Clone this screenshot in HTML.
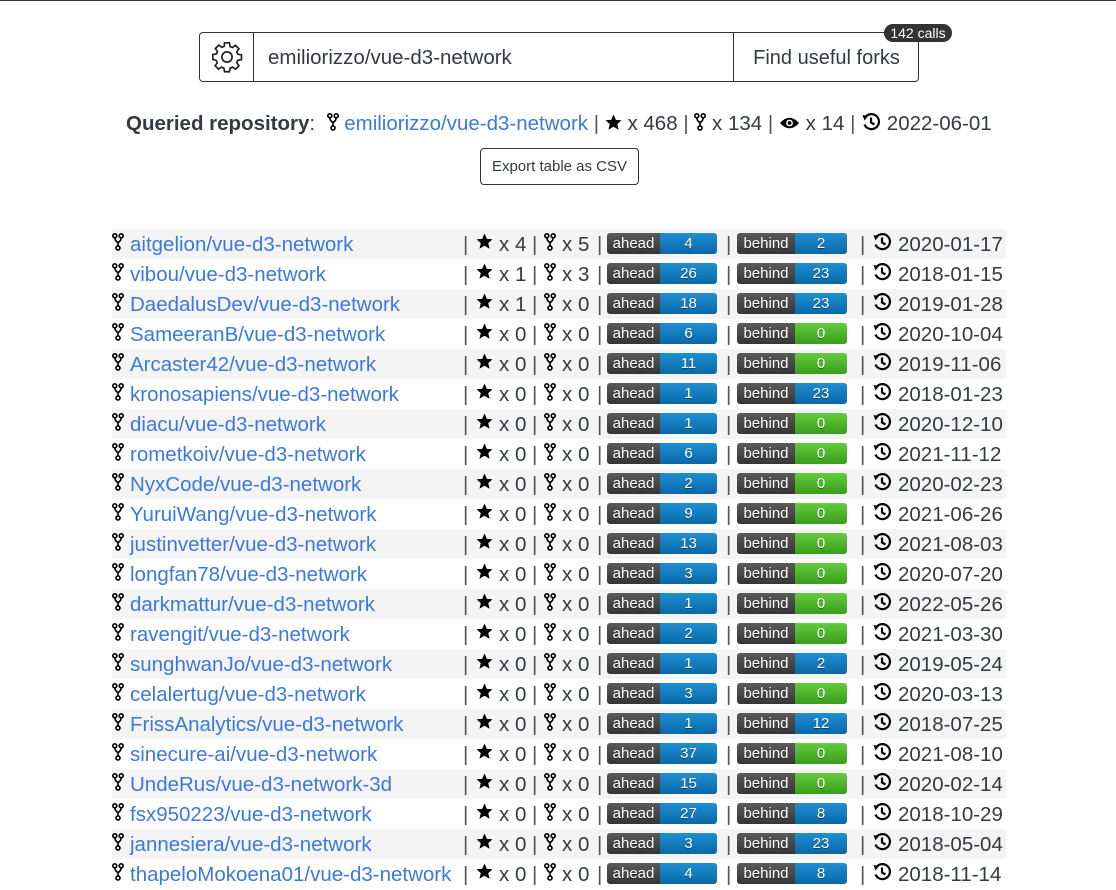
<!DOCTYPE html>
<html><head><meta charset="utf-8">
<style>
*{box-sizing:border-box;margin:0;padding:0}
body{width:1116px;height:889px;overflow:hidden;background:#fff;font-family:"Liberation Sans",sans-serif;color:#343a40;position:relative;border-top:1px solid #333}
.a{position:absolute}
a{color:#3b78e0;text-decoration:none}
.search{left:199px;top:31px;width:720px;height:50px;border:1px solid #333;border-radius:4px}
.gear{left:0;top:0;width:54px;height:48px;border-right:1px solid #333}
.inp{left:68px;top:13px;font-size:20.5px}
.btn{left:533px;top:0;width:186px;height:48px;border-left:1px solid #333;font-size:20px;text-align:center;line-height:50px}
.calls{left:884px;top:23px;width:68px;height:18px;background:#333;color:#fff;border-radius:9px;font-size:14px;text-align:center;line-height:18px}
.q{top:110px;left:126px;font-size:20.5px;white-space:nowrap;line-height:26px}
.export{left:480px;top:147px;width:159px;height:37px;border:1px solid #333;border-radius:4px;font-size:15px;text-align:center;line-height:35px}
.row{position:absolute;left:112px;width:894px;height:30px;font-size:20.5px;line-height:31px}
.row.s{background:#f4f4f4}
.row>*{position:absolute;top:0}
.sep{color:#555}
.bd{top:4px!important;height:21px;border-radius:3px;overflow:hidden;font-size:15px;color:#fff;line-height:21px;text-shadow:0 1px 0 rgba(0,0,0,.4)}
.bd span{position:absolute;top:0;height:21px;text-align:center}
.l{background:linear-gradient(#5a5a5a,#353535)}
.b{background:linear-gradient(#1e8fd4,#0a68a6)}
.g{background:linear-gradient(#63cc3c,#3a9d1c)}
svg{display:block}
</style></head><body>
<svg width="0" height="0" style="position:absolute">
<symbol id="fk" viewBox="0 0 12 18"><g fill="none" stroke="#000" stroke-width="1.6"><circle cx="2.8" cy="2.8" r="2"/><circle cx="9.2" cy="2.8" r="2"/><circle cx="6" cy="15" r="2"/><path d="M2.8 4.8 Q3 8 6 9.5 Q9 8 9.2 4.8 M6 9.5 V13"/></g></symbol>
<symbol id="st" viewBox="0 0 16 16"><path d="M8 .5l2.2 5 5.3.4-4 3.6 1.3 5.3L8 12 3.2 14.8l1.3-5.3-4-3.6 5.3-.4z" fill="#000"/></symbol>
<symbol id="ck" viewBox="0 0 20 20"><g fill="none" stroke="#000" stroke-width="2.2"><path d="M3.5 12.5 A7.5 7.5 0 1 0 4.5 5"/><path d="M10 5.5 V10.5 L13.5 12.5"/></g><path d="M1.5 3 L7 4 L3.5 8.5 Z" fill="#000"/></symbol>
<symbol id="ey" viewBox="0 0 22 14"><path d="M1 7 Q11 -4 21 7 Q11 18 1 7Z" fill="#000"/><circle cx="11" cy="7" r="3.6" fill="#fff"/><circle cx="11" cy="7" r="2" fill="#000"/></symbol>
</svg>

<div class="a search">
 <div class="a gear"><svg width="34" height="34" viewBox="0 0 24 24" style="margin:7px 0 0 10px"><path fill="none" stroke="#222" stroke-width="1.2" d="M10.3 2h3.4l.5 2.6 1.6.7 2.2-1.5 2.4 2.4-1.5 2.2.7 1.6 2.6.5v3.4l-2.6.5-.7 1.6 1.5 2.2-2.4 2.4-2.2-1.5-1.6.7-.5 2.6h-3.4l-.5-2.6-1.6-.7-2.2 1.5-2.4-2.4 1.5-2.2-.7-1.6L2 13.7v-3.4l2.6-.5.7-1.6-1.5-2.2 2.4-2.4 2.2 1.5 1.6-.7z"/><circle cx="12" cy="12" r="3.6" fill="none" stroke="#222" stroke-width="1.2"/></svg></div>
 <div class="a inp">emiliorizzo/vue-d3-network</div>
 <div class="a btn">Find useful forks</div>
</div>
<div class="a calls">142 calls</div>

<div class="a q"><b>Queried repository</b>: &nbsp;<svg width="12" height="18" style="display:inline-block;vertical-align:-1px"><use href="#fk"/></svg> <a>emiliorizzo/vue-d3-network</a> <span class="sep">|</span> <svg width="17" height="17" style="display:inline-block;vertical-align:-1px"><use href="#st"/></svg> x 468 <span class="sep">|</span> <svg width="12" height="18" style="display:inline-block;vertical-align:-1px"><use href="#fk"/></svg> x 134 <span class="sep">|</span> <svg width="21" height="14" style="display:inline-block;vertical-align:0"><use href="#ey"/></svg> x 14 <span class="sep">|</span> <svg width="20" height="20" style="display:inline-block;vertical-align:-2px"><use href="#ck"/></svg> 2022-06-01</div>
<div class="a export">Export table as CSV</div>

<div id="rows"></div>
<script>
var d=[["aitgelion/vue-d3-network",4,5,4,"2","b","2020-01-17"],["vibou/vue-d3-network",1,3,26,"23","b","2018-01-15"],["DaedalusDev/vue-d3-network",1,0,18,"23","b","2019-01-28"],["SameeranB/vue-d3-network",0,0,6,"0","g","2020-10-04"],["Arcaster42/vue-d3-network",0,0,11,"0","g","2019-11-06"],["kronosapiens/vue-d3-network",0,0,1,"23","b","2018-01-23"],["diacu/vue-d3-network",0,0,1,"0","g","2020-12-10"],["rometkoiv/vue-d3-network",0,0,6,"0","g","2021-11-12"],["NyxCode/vue-d3-network",0,0,2,"0","g","2020-02-23"],["YuruiWang/vue-d3-network",0,0,9,"0","g","2021-06-26"],["justinvetter/vue-d3-network",0,0,13,"0","g","2021-08-03"],["longfan78/vue-d3-network",0,0,3,"0","g","2020-07-20"],["darkmattur/vue-d3-network",0,0,1,"0","g","2022-05-26"],["ravengit/vue-d3-network",0,0,2,"0","g","2021-03-30"],["sunghwanJo/vue-d3-network",0,0,1,"2","b","2019-05-24"],["celalertug/vue-d3-network",0,0,3,"0","g","2020-03-13"],["FrissAnalytics/vue-d3-network",0,0,1,"12","b","2018-07-25"],["sinecure-ai/vue-d3-network",0,0,37,"0","g","2021-08-10"],["UndeRus/vue-d3-network-3d",0,0,15,"0","g","2020-02-14"],["fsx950223/vue-d3-network",0,0,27,"8","b","2018-10-29"],["jannesiera/vue-d3-network",0,0,3,"23","b","2018-05-04"],["thapeloMokoena01/vue-d3-network",0,0,4,"8","b","2018-11-14"]];
var h="";
d.forEach(function(r,i){
h+='<div class="row'+(i%2==0?' s':'')+'" style="top:'+(228+i*30)+'px">'+
'<svg style="left:0;top:4px" width="12" height="18"><use href="#fk"/></svg>'+
'<a style="left:18px">'+r[0]+'</a>'+
'<span class="sep" style="left:351px">|</span>'+
'<svg style="left:364px;top:4px" width="17" height="17"><use href="#st"/></svg>'+
'<span style="left:387px">x '+r[1]+'</span>'+
'<span class="sep" style="left:420px">|</span>'+
'<svg style="left:432px;top:4px" width="12" height="18"><use href="#fk"/></svg>'+
'<span style="left:450px">x '+r[2]+'</span>'+
'<span class="sep" style="left:485px">|</span>'+
'<div class="bd" style="left:495px;width:110px"><span class="l" style="left:0;width:53px">ahead</span><span class="b" style="left:53px;width:57px">'+r[3]+'</span></div>'+
'<span class="sep" style="left:614px">|</span>'+
'<div class="bd" style="left:625px;width:110px"><span class="l" style="left:0;width:58px">behind</span><span class="'+r[5]+'" style="left:58px;width:52px">'+r[4]+'</span></div>'+
'<span class="sep" style="left:748px">|</span>'+
'<svg style="left:760px;top:3px" width="20" height="20"><use href="#ck"/></svg>'+
'<span style="left:786px">'+r[6]+'</span></div>';
});
document.getElementById("rows").innerHTML=h;
</script>
</body></html>
